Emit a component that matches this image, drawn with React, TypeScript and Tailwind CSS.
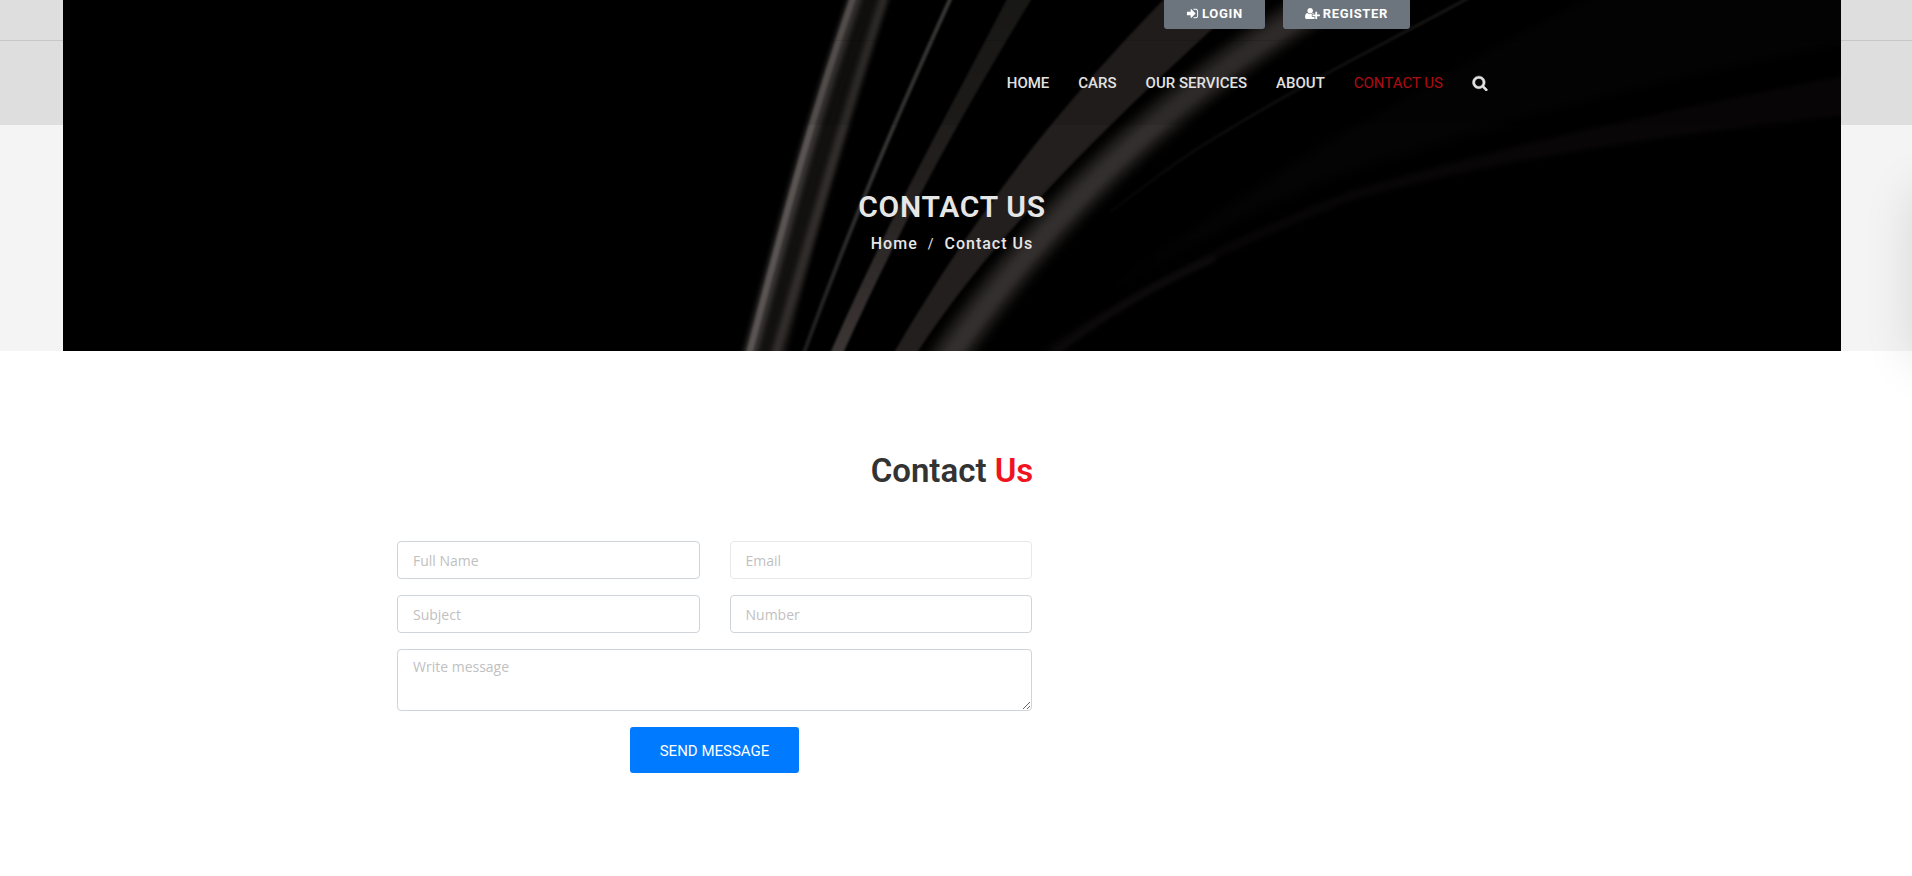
import React from "react";

const navItems = [
  { label: "HOME", active: false },
  { label: "CARS", active: false },
  { label: "OUR SERVICES", active: false },
  { label: "ABOUT", active: false },
  { label: "CONTACT US", active: true },
];

function SignInIcon() {
  return (
    <svg viewBox="0 0 1792 1792" className="size-[13px] fill-current" aria-hidden="true">
      <path d="M1312 896q0 26-19 45l-544 544q-19 19-45 19t-45-19-19-45v-288h-448q-26 0-45-19t-19-45v-384q0-26 19-45t45-19h448v-288q0-26 19-45t45-19 45 19l544 544q19 19 19 45zm352-352v704q0 119-84.5 203.5t-203.5 84.5h-320q-13 0-22.5-9.5t-9.5-22.5q0-4-1-20t-.5-26.5 3-23.5 10-19.5 20.5-6.5h320q66 0 113-47t47-113v-704q0-66-47-113t-113-47h-312l-11.5-1-11.5-3-8-5.5-7-9-2-13.5q0-4-1-20t-.5-26.5 3-23.5 10-19.5 20.5-6.5h320q119 0 203.5 84.5t84.5 203.5z" />
    </svg>
  );
}

function UserPlusIcon() {
  return (
    <svg viewBox="0 0 2048 1792" className="h-[13px] w-[15px] fill-current" aria-hidden="true">
      <path d="M704 896q-159 0-271.5-112.5t-112.5-271.5 112.5-271.5 271.5-112.5 271.5 112.5 112.5 271.5-112.5 271.5-271.5 112.5zm960 128h352q13 0 22.5 9.5t9.5 22.5v192q0 13-9.5 22.5t-22.5 9.5h-352v352q0 13-9.5 22.5t-22.5 9.5h-192q-13 0-22.5-9.5t-9.5-22.5v-352h-352q-13 0-22.5-9.5t-9.5-22.5v-192q0-13 9.5-22.5t22.5-9.5h352v-352q0-13 9.5-22.5t22.5-9.5h192q13 0 22.5 9.5t9.5 22.5v352zm-736 224q0 52 38 90t90 38h256v238q-68 50-171 50h-874q-121 0-194-69t-73-190q0-53 3.5-103.5t14-109 26.5-108.5 43-97.5 62-81 85.5-53.5 111.5-20q19 0 39 17 79 61 154.5 91.5t164.5 30.5 164.5-30.5 154.5-91.5q20-17 39-17 132 0 217 96h-223q-52 0-90 38t-38 90v192z" />
    </svg>
  );
}

function SearchIcon() {
  return (
    <svg viewBox="0 0 1792 1792" className="size-4 fill-current stroke-current" strokeWidth="60" aria-hidden="true">
      <path d="M1216 832q0-185-131.5-316.5t-316.5-131.5-316.5 131.5-131.5 316.5 131.5 316.5 316.5 131.5 316.5-131.5 131.5-316.5zm512 832q0 52-38 90t-90 38q-54 0-90-38l-343-342q-179 124-399 124-143 0-273.5-55.5t-225-150-150-225-55.5-273.5 55.5-273.5 150-225 225-150 273.5-55.5 273.5 55.5 225 150 150 225 55.5 273.5q0 220-124 399l343 343q37 37 37 90z" />
    </svg>
  );
}

/* Light streaks over black, shown behind the header and page title. */
function HeroBackdrop() {
  return (
    <svg
      viewBox="63 0 1778 351"
      preserveAspectRatio="xMidYMid meet"
      className="block h-full w-full"
      aria-hidden="true"
    >
      <defs>
        <filter id="soft1" x="-20%" y="-20%" width="140%" height="140%" colorInterpolationFilters="sRGB">
          <feGaussianBlur stdDeviation="1" />
        </filter>
        <filter id="soft2" x="-20%" y="-20%" width="140%" height="140%" colorInterpolationFilters="sRGB">
          <feGaussianBlur stdDeviation="2.5" />
        </filter>
        <filter id="soft6" x="-20%" y="-20%" width="140%" height="140%" colorInterpolationFilters="sRGB">
          <feGaussianBlur stdDeviation="6" />
        </filter>
        <linearGradient id="bandD" x1="0" y1="0" x2="0" y2="1">
          <stop offset="0" stopColor="#1b1b1a" />
          <stop offset="0.5" stopColor="#221f1e" />
          <stop offset="1" stopColor="#3d3736" />
        </linearGradient>
        <linearGradient id="lineC" x1="0" y1="0" x2="0" y2="1">
          <stop offset="0" stopColor="#3f3e3c" />
          <stop offset="0.5" stopColor="#343332" />
          <stop offset="1" stopColor="#1f1d1d" />
        </linearGradient>
        <linearGradient id="lineG" gradientUnits="userSpaceOnUse" x1="1110" y1="212" x2="1470" y2="0">
          <stop offset="0" stopColor="#050505" />
          <stop offset="1" stopColor="#1c1a19" />
        </linearGradient>
        <clipPath id="frame">
          <rect x="63" y="0" width="1778" height="351" />
        </clipPath>
      </defs>
      <rect x="63" y="0" width="1778" height="351" fill="#000" />
      <g clipPath="url(#frame)" fill="none">
        <path filter="url(#soft6)" fill="#050404" d="M1050 335C1130 270 1230 222 1326 180C1490 122 1680 78 1860 42L1860 -20L1620 -20C1440 70 1250 180 1050 335Z" />
        <path filter="url(#soft2)" fill="#080607" d="M1055 351C1120 304 1200 262 1347 202C1500 158 1680 133 1860 115L1860 72C1690 104 1500 146 1347 192C1200 250 1110 304 1040 351Z" />
        <path filter="url(#soft2)" stroke="#110e0e" strokeWidth="5" d="M1048 358C1100 318 1150 287 1215 258" />
        <path filter="url(#soft1)" stroke="url(#lineG)" strokeWidth="3" d="M1472 -4C1400 36 1300 84 1200 147C1170 166 1150 182 1110 212" />

        <path filter="url(#soft2)" fill="#131110" d="M855 -5C805 135 785 220 748 360L785 360C812 250 842 130 884 -5Z" />
        <path filter="url(#soft2)" stroke="#3a3635" strokeWidth="13" d="M856 -5C808 135 788 215 749 358" />
        <path filter="url(#soft1)" stroke="#5a5553" strokeWidth="6" d="M854 -5C806 135 786 215 748 358" />
        <path filter="url(#soft2)" stroke="#332f2d" strokeWidth="9" d="M885 -5C844 120 814 225 774 360" />

        <path filter="url(#soft1)" stroke="url(#lineC)" strokeWidth="4" d="M952 -5C900 110 858 205 802 358" />
        <path filter="url(#soft1)" fill="url(#bandD)" d="M1009 -5C950 110 895 205 828 358L841 358C905 215 970 100 1034 -5Z" />
        <path filter="url(#soft1)" fill="#231f1e" d="M1168 -5C1080 85 985 195 892 356L915 356C990 240 1100 130 1250 -5Z" />
        <path filter="url(#soft6)" stroke="#2a2725" strokeWidth="32" d="M1360 -20C1200 70 1057 195 943 365" />
        <path filter="url(#soft2)" stroke="#332f2e" strokeWidth="14" d="M1345 -8C1200 72 1061 194 948 360" />
      </g>
    </svg>
  );
}

const fieldClass =
  "block w-full rounded border bg-white px-[15px] text-sm text-gray-700 placeholder:text-[#c1bfbf] placeholder:opacity-100 font-['Open_Sans',sans-serif] focus:outline-none";

const topButtonClass =
  "-mt-[2px] flex h-[31px] items-center gap-[3px] rounded-[3px] bg-[#6c757d] px-[22px] text-[13px] font-bold tracking-wider text-white";

export default function App() {
  return (
    <div className="relative overflow-hidden bg-white font-['Roboto',sans-serif]">
      <section className="relative bg-[#f4f4f4]">
        <div className="absolute inset-y-0 left-0 right-2">
          <HeroBackdrop />
        </div>

        <header className="relative bg-black/9">
          <div className="h-[41px] border-b border-black/10 pr-2">
            <div className="mx-auto flex max-w-[1140px] justify-end gap-[18px] pr-28">
              <button className={topButtonClass}>
                <SignInIcon />
                LOGIN
              </button>
              <button className={topButtonClass}>
                <UserPlusIcon />
                REGISTER
              </button>
            </div>
          </div>
          <div className="h-[84px] pr-2">
            <nav className="mx-auto flex h-full max-w-[1140px] items-center justify-end gap-[29px] pr-[34px]">
              {navItems.map((item) => (
                <a
                  key={item.label}
                  href="#"
                  className={
                    item.active
                      ? "text-[15px] font-normal text-[#b00c14]"
                      : "text-[15px] font-medium text-[#e2e2e2]"
                  }
                >
                  {item.label}
                </a>
              ))}
              <button aria-label="Search" className="text-[#e2e2e2]">
                <SearchIcon />
              </button>
            </nav>
          </div>
        </header>

        <div className="relative flex h-[226px] flex-col items-center pt-[62px] pr-2 text-[#e6e6e6]">
          <h1 className="text-[30px] leading-10 font-semibold tracking-wide">CONTACT US</h1>
          <nav
            aria-label="Breadcrumb"
            className="mt-[5px] flex items-center text-base leading-6 font-medium tracking-[1px]"
          >
            <a href="#">Home</a>
            <span className="px-2.5 text-sm font-normal">/</span>
            <span>Contact Us</span>
          </nav>
        </div>
      </section>

      <main className="pt-[100px] pr-2 pb-[103px]">
        <h2 className="text-center text-[33px] leading-10 font-semibold text-[#333]">
          Contact <span className="text-[#f01420]">Us</span>
        </h2>
        <div className="mx-auto mt-[50px] max-w-[1140px] px-[15px]">
          <form className="grid max-w-[635px] grid-cols-2 gap-x-[30px] gap-y-4">
            <input aria-label="Full Name" placeholder="Full Name" className={`${fieldClass} h-[38px] border-[#ced4da]`} />
            <input aria-label="Email" type="email" placeholder="Email" className={`${fieldClass} h-[38px] border-[#e6e8ea]`} />
            <input aria-label="Subject" placeholder="Subject" className={`${fieldClass} h-[38px] border-[#ced4da]`} />
            <input aria-label="Number" placeholder="Number" className={`${fieldClass} h-[38px] border-[#ced4da]`} />
            <textarea
              aria-label="Write message"
              placeholder="Write message"
              className={`${fieldClass} col-span-2 h-[62px] resize border-[#ced4da] py-[7px]`}
            />
            <button
              type="button"
              className="col-span-2 h-[46px] justify-self-center rounded-[3px] bg-[#007bff] px-[30px] pt-[2px] text-[15px] font-normal text-white"
            >
              SEND MESSAGE
            </button>
          </form>
        </div>
      </main>

      <div className="pointer-events-none absolute top-[190px] -right-20 h-[170px] w-20 shadow-[0_0_50px_rgba(0,0,0,0.12)]" />
    </div>
  );
}
